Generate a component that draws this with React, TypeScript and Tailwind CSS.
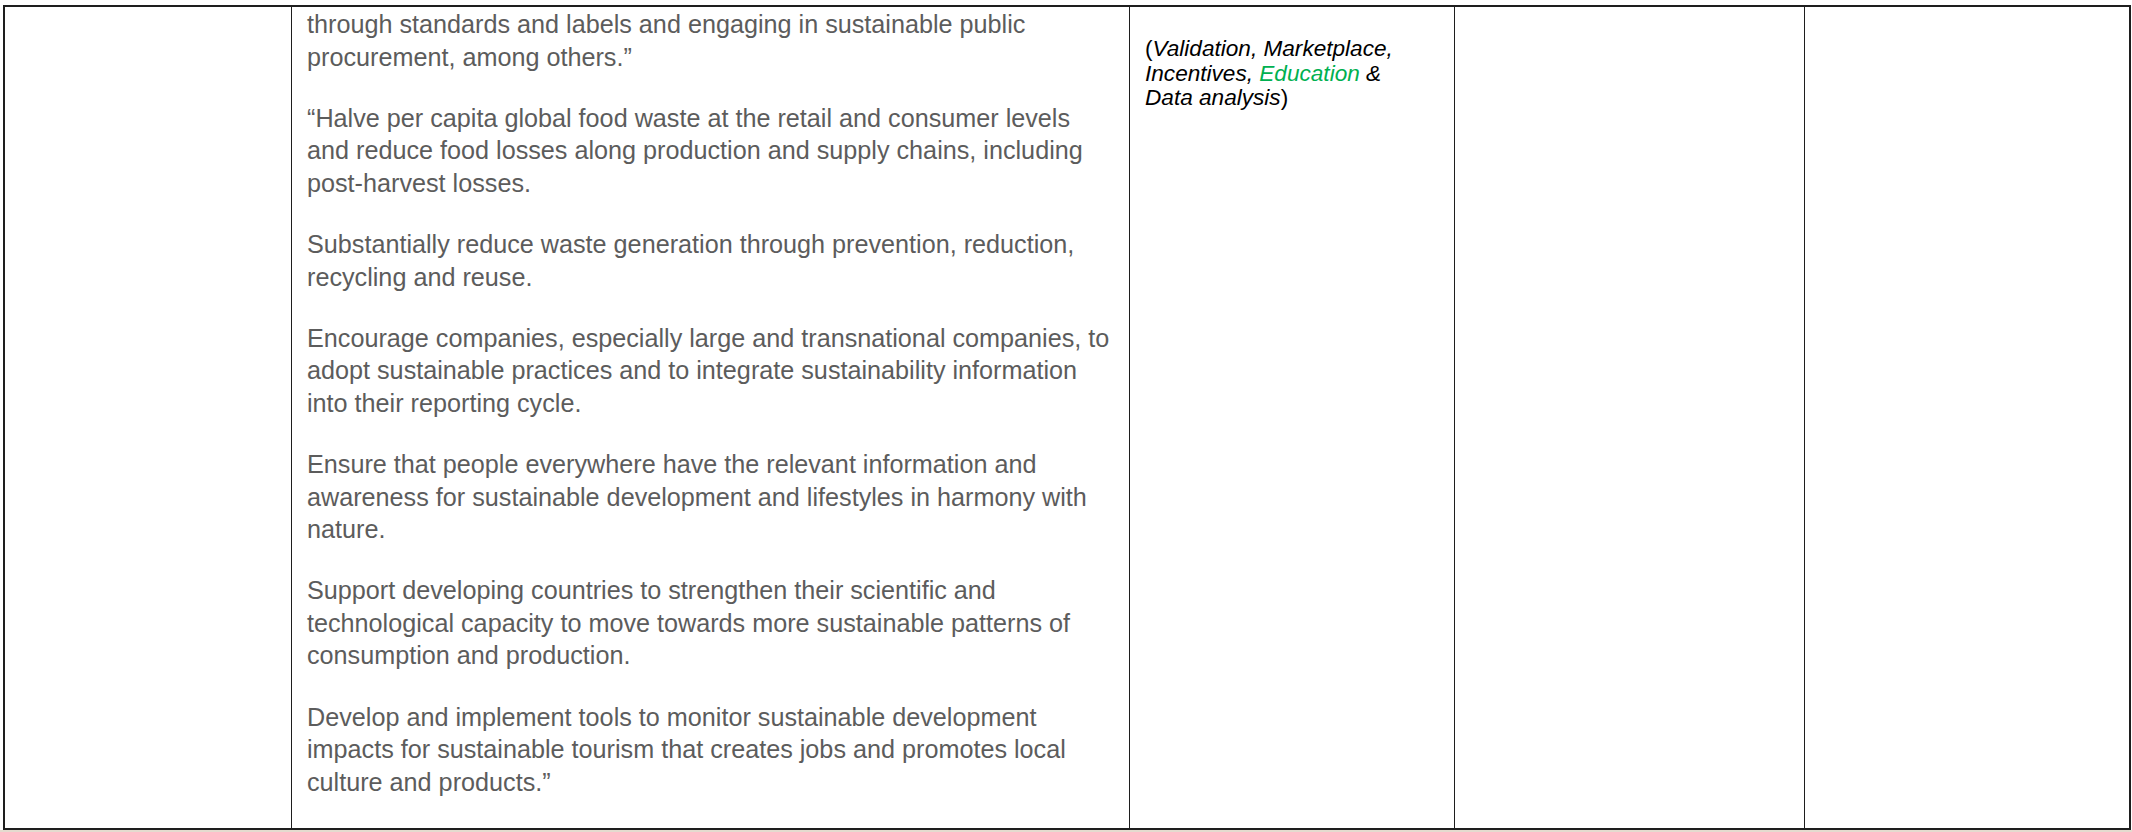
import React from 'react'

// Continuation row of the SDG target table (goal 12 text + approach column)

const targetParagraphs: string[][] = [
  ['through standards and labels and engaging in sustainable public', 'procurement, among others.\u201D'],
  [
    '\u201CHalve per capita global food waste at the retail and consumer levels',
    'and reduce food losses along production and supply chains, including',
    'post-harvest losses.',
  ],
  ['Substantially reduce waste generation through prevention, reduction,', 'recycling and reuse.'],
  [
    'Encourage companies, especially large and transnational companies, to',
    'adopt sustainable practices and to integrate sustainability information',
    'into their reporting cycle.',
  ],
  [
    'Ensure that people everywhere have the relevant information and',
    'awareness for sustainable development and lifestyles in harmony with',
    'nature.',
  ],
  [
    'Support developing countries to strengthen their scientific and',
    'technological capacity to move towards more sustainable patterns of',
    'consumption and production.',
  ],
  [
    'Develop and implement tools to monitor sustainable development',
    'impacts for sustainable tourism that creates jobs and promotes local',
    'culture and products.\u201D',
  ],
]

function TargetText() {
  return (
    <div className="flex flex-col gap-[28.5px] pt-[1px] pl-[15px] text-[#5c5c5c] text-[25.2px] leading-[32.6px] font-['Liberation_Sans',Arial,sans-serif]">
      {targetParagraphs.map((lines, i) => (
        <p key={i}>
          {lines.map((line) => (
            <span key={line} className="block whitespace-nowrap">
              {line}
            </span>
          ))}
        </p>
      ))}
    </div>
  )
}

function ApproachText() {
  return (
    <div className="pt-[30px] pl-[15px] text-black text-[22.6px] leading-[24.5px] font-['Liberation_Sans',Arial,sans-serif]">
      <span className="block whitespace-nowrap">
        (<em>Validation, Marketplace,</em>
      </span>
      <span className="block whitespace-nowrap">
        <em>Incentives, </em>
        <em className="text-[#00b050]">Education</em>
        <em> &amp;</em>
      </span>
      <span className="block whitespace-nowrap">
        <em>Data analysis</em>)
      </span>
    </div>
  )
}

export default function App() {
  return (
    <div className="w-[2132px] h-[832px] bg-white overflow-hidden">
      <div className="pt-[5px] pl-[3px]">
        <div className="flex w-[2128px] h-[825px] border-t-2 border-l-2 border-b-2 border-[#1e1e1e]">
          <div className="w-[287px] shrink-0 border-r border-[#1e1e1e]" />
          <div className="w-[838px] shrink-0 border-r border-[#1e1e1e]">
            <TargetText />
          </div>
          <div className="w-[325px] shrink-0 border-r border-[#1e1e1e]">
            <ApproachText />
          </div>
          <div className="w-[350px] shrink-0 border-r border-[#1e1e1e]" />
          <div className="w-[326px] shrink-0 border-r-2 border-[#1e1e1e]" />
        </div>
      </div>
      <div className="h-[2px] bg-[#e4dbcf]" />
    </div>
  )
}
